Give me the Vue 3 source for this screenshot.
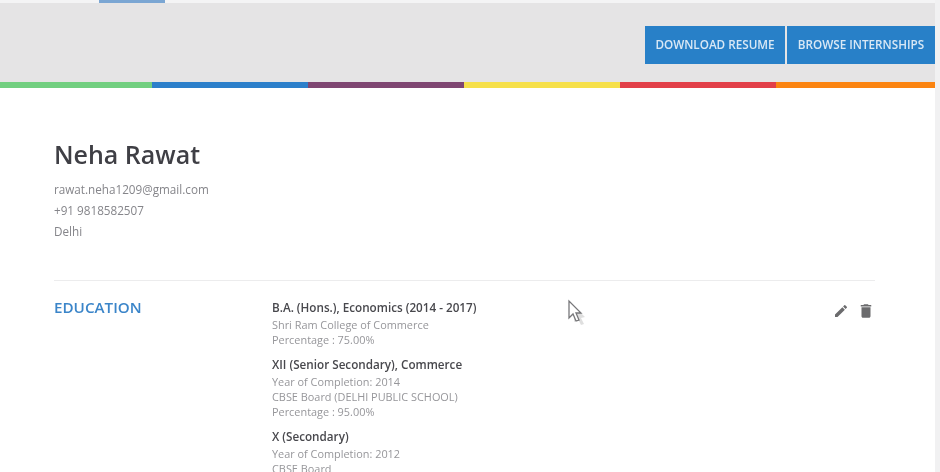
<script setup>
const stripes = [
  { color: '#72cf80', width: 152 },
  { color: '#2c7fca', width: 156 },
  { color: '#7f4672', width: 156 },
  { color: '#f6e04a', width: 156 },
  { color: '#e23f49', width: 156 },
  { color: '#fb8411', width: 159 },
]
const entries = [
  { title: 'B.A. (Hons.), Economics (2014 - 2017)', lines: ['Shri Ram College of Commerce', 'Percentage : 75.00%'] },
  { title: 'XII (Senior Secondary), Commerce', lines: ['Year of Completion: 2014', 'CBSE Board (DELHI PUBLIC SCHOOL)', 'Percentage : 95.00%'] },
  { title: 'X (Secondary)', lines: ['Year of Completion: 2012', 'CBSE Board'] },
]
</script>

<template>
  <div class="screen">
    <div class="page">
      <div class="topline"><span class="tab"></span></div>
      <header class="band">
        <button class="btn">DOWNLOAD RESUME</button>
        <button class="btn">BROWSE INTERNSHIPS</button>
      </header>
      <div class="stripes">
        <span v-for="s in stripes" :key="s.color" :style="{ background: s.color, width: s.width + 'px' }"></span>
      </div>
      <main class="resume">
        <h1 class="name">Neha Rawat</h1>
        <div class="contact">
          <div>rawat.neha1209@gmail.com</div>
          <div>+91 9818582507</div>
          <div>Delhi</div>
        </div>
        <section class="section">
          <h2 class="heading">EDUCATION</h2>
          <div class="entries">
            <div v-for="e in entries" :key="e.title" class="entry">
              <div class="title">{{ e.title }}</div>
              <div v-for="l in e.lines" :key="l" class="line">{{ l }}</div>
            </div>
          </div>
          <div class="actions">
            <svg width="16" height="16" viewBox="0 0 24 24" fill="#6b6b6d"><path d="M3 17.25V21h3.75L17.81 9.94l-3.75-3.75L3 17.25zM20.71 7.04a1 1 0 0 0 0-1.41l-2.34-2.34a1 1 0 0 0-1.41 0l-1.83 1.83 3.75 3.75 1.83-1.83z"/></svg>
            <svg width="18" height="18" viewBox="0 0 24 24" fill="#6b6b6d"><path d="M6 19c0 1.1.9 2 2 2h8c1.100 0 2-.9 2-2V7H6v12zM19 4h-3.500l-1-1h-5l-1 1H5v2h14V4z"/></svg>
          </div>
        </section>
      </main>
    </div>
    <svg class="cursor" width="22" height="28" viewBox="0 0 22 28">
      <path d="M7 7l11 11-4 1 3 6-3 1-3-6-4 3z" fill="#c9c9c9" opacity=".6"/>
      <path d="M2 2v17l4-4 3 7 3-1-3-7h5z" fill="#fff" stroke="#77777a" stroke-width="1.300"/>
    </svg>
  </div>
</template>

<style>
html, body { margin: 0; background: #fff; }
</style>

<style scoped>
.screen {
  position: relative;
  width: 940px;
  height: 472px;
  overflow: hidden;
  background: #f1f1f2;
  font-family: "Open Sans", "Noto Sans", sans-serif;
  filter: blur(0.4px);
}
.page {
  width: 935px;
  height: 472px;
  background: #fff;
  overflow: hidden;
}
.topline {
  height: 3px;
  background: #f4f4f5;
}
.tab {
  display: block;
  width: 66px;
  height: 3px;
  margin-left: 99px;
  background: #7ba6d3;
}
.band {
  display: flex;
  justify-content: flex-end;
  align-items: flex-start;
  gap: 2px;
  height: 79px;
  padding-top: 23px;
  box-sizing: border-box;
  background: #e5e4e5;
}
.btn {
  height: 38px;
  padding: 0 0 2px;
  border: 0;
  background: #2880c8;
  color: #d9e8f5;
  font: 600 11.7px "Open Sans", sans-serif;
}
.btn:first-child { width: 140px; }
.btn:last-child { width: 148px; }
.stripes {
  display: flex;
  height: 6px;
}
.stripes span { display: block; flex: none; }
.resume {
  padding: 50px 60px 0 54px;
}
.name {
  margin: 0;
  font-size: 25px;
  font-weight: 600;
  line-height: 33px;
  color: #3f3f45;
}
.contact {
  margin-top: 8px;
  font-size: 11.7px;
  line-height: 21px;
  color: #85858a;
}
.section {
  display: flex;
  margin-top: 38px;
  padding-top: 18px;
  border-top: 1px solid #ececed;
}
.heading {
  width: 218px;
  flex: none;
  margin: -2px 0 0;
  font-size: 15.2px;
  font-weight: 600;
  line-height: 20px;
  color: #3b85c9;
}
.entries {
  flex: 1;
}
.entry {
  margin-bottom: 9px;
}
.title {
  margin: -1px 0 1px;
  font-size: 11.7px;
  font-weight: 600;
  line-height: 18px;
  color: #48484d;
}
.line {
  font-size: 10.9px;
  line-height: 15px;
  color: #96969a;
}
.actions {
  display: flex;
  align-items: center;
  gap: 8px;
  height: 24px;
}
.cursor {
  position: absolute;
  left: 567px;
  top: 299px;
}
</style>
